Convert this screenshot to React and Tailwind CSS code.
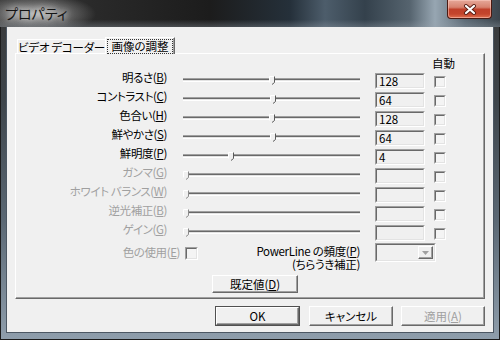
const FONT = "font-['Noto_Sans_CJK_JP','Noto_Sans',sans-serif] [font-feature-settings:'palt']";

function U({ children }) {
  return <span className="underline underline-offset-[1px]">{children}</span>;
}

function Sunken({ className = "", children, fill = "bg-[#f0f0f0]" }) {
  return (
    <div className={`border-t border-l border-r border-b border-t-[#a0a0a0] border-l-[#a0a0a0] border-r-white border-b-white ${className}`}>
      <div className={`h-full w-full border-t border-l border-r border-b border-t-[#696969] border-l-[#696969] border-r-[#e3e3e3] border-b-[#e3e3e3] ${fill}`}>
        {children}
      </div>
    </div>
  );
}

function Raised({ className = "", children }) {
  return (
    <div className={`border-t border-l border-r border-b border-t-white border-l-white border-r-[#696969] border-b-[#696969] shadow-[inset_-1px_-1px_0_#a0a0a0] bg-[#f0f0f0] ${className}`}>
      {children}
    </div>
  );
}

function Thumb({ left, disabled }) {
  return (
    <svg className="absolute top-[-2px]" style={{ left }} width="6" height="9" viewBox="0 0 6 9">
      <path d="M0.5 0.5 H5.5 V6.5 L3 8.5 L0.5 6.5 Z" fill="#f0f0f0" />
      <path d="M0.5 6.5 V0.5 H5" stroke="#ffffff" fill="none" />
      <path d="M5.5 0.5 V6.5 L3 8.5" stroke={disabled ? "#8a8a8a" : "#5a5a5a"} fill="none" />
    </svg>
  );
}

const rows = [
  { label: "明るさ", k: "B", val: "128", pos: 272, en: true },
  { label: "コントラスト", k: "C", val: "64", pos: 273, en: true },
  { label: "色合い", k: "H", val: "128", pos: 272, en: true },
  { label: "鮮やかさ", k: "S", val: "64", pos: 273, en: true },
  { label: "鮮明度", k: "P", val: "4", pos: 231, en: true },
  { label: "ガンマ", k: "G", val: "", pos: 186, en: false },
  { label: "ホワイト バランス", k: "W", val: "", pos: 186, en: false },
  { label: "逆光補正", k: "B", val: "", pos: 186, en: false },
  { label: "ゲイン", k: "G", val: "", pos: 186, en: false },
];

function Row({ r }) {
  return (
    <div className="h-[19px] flex items-start">
      <div className={`w-[151px] text-right mt-[-1px] h-[12px] leading-[12px] text-[11.5px] tracking-[-0.4px] whitespace-nowrap ${r.en ? "text-black" : "text-[#a0a0a0]"}`}>
        {r.label}(<U>{r.k}</U>)
      </div>
      <div className="ml-[16px] w-[177px] mt-[6px] h-[4px] relative">
        <div className="h-[4px] border-t border-b border-t-[#a0a0a0] border-b-white">
          <div className="h-[1px] bg-[#696969]" />
          <div className="h-[1px] bg-[#e3e3e3]" />
        </div>
        <Thumb left={r.pos - 183 - 3} disabled={!r.en} />
      </div>
      <Sunken className="ml-[15px] w-[50px] h-[16px] mt-[1px]">
        <div className="pl-[2px] text-[11.5px] leading-[13px] text-black">{r.val}</div>
      </Sunken>
      <Sunken className="ml-[9px] w-[12px] h-[12px] mt-[4px]" fill="bg-[#f4f4f4]" />
    </div>
  );
}

function TitleBar() {
  return (
    <div className="h-[27px] flex items-start relative [background:linear-gradient(180deg,rgba(0,0,0,0)_0%,rgba(0,0,0,0)_72%,rgba(150,160,170,0.35)_100%),radial-gradient(ellipse_60px_20px_at_36px_14px,rgba(200,200,200,0.85)_0%,rgba(160,160,160,0.5)_50%,rgba(60,60,60,0)_100%),linear-gradient(90deg,#3a3a3a_0%,#2a2a2a_18%,#1c1c1c_42%,#25303a_58%,#4d5d6b_65%,#34414c_73%,#56646f_82%,#97a6b2_87%,#5c6a75_93%,#3b444c_100%)]">
      <div className="h-[27px] flex items-center pl-[5px] text-[14px] text-[#141414] [text-shadow:0_0_6px_#e0e0e0,0_0_10px_#d0d0d0]">
        プロパティ
      </div>
      <div className="ml-auto mr-[8px] w-[45px] h-[19px] rounded-b-[4px] border-l border-r border-b border-l-[#4a1a12] border-r-[#4a1a12] border-b-[#4a1a12] flex items-center justify-center [background:linear-gradient(180deg,#e6a899_0%,#d7826f_40%,#c0402a_52%,#c4452c_78%,#e07050_100%)] shadow-[inset_0_0_0_1px_rgba(255,210,200,0.5)]">
        <svg width="14" height="11" viewBox="0 0 14 11">
          <path d="M3 2 L11 9 M11 2 L3 9" stroke="#5a1e14" strokeWidth="4" strokeLinecap="round" />
          <path d="M3 2 L11 9 M11 2 L3 9" stroke="#ffffff" strokeWidth="2.2" strokeLinecap="round" />
        </svg>
      </div>
    </div>
  );
}

function Client() {
  return (
    <div className="w-[486px] h-[305px] bg-[#f0f0f0] shadow-[0_0_0_1px_#4c5763] pt-[10px] px-[8px] flex flex-col text-black">
      <div className="flex items-end h-[16px]">
        <div className="ml-[2px] w-[88px] h-[14px] border-l border-t border-l-white border-t-white flex items-center justify-center text-[11.5px] tracking-[-0.3px] leading-[12px] whitespace-nowrap">
          ビデオ デコーダー
        </div>
        <div className="relative z-10 w-[70px] h-[17px] mb-[-1px] bg-[#f0f0f0] border-l border-t border-r border-l-white border-t-white border-r-[#696969] shadow-[inset_-1px_0_0_#a0a0a0] flex justify-center pt-[1px]">
          <div className="h-[15px] w-[66px] border border-dotted border-[#333] text-[11.5px] leading-[13px] text-center whitespace-nowrap">
            画像の調整
          </div>
        </div>
      </div>
      <div className="h-[246px] border-l border-t border-r border-b border-l-white border-t-white border-r-[#696969] border-b-[#696969] shadow-[inset_-1px_-1px_0_#a0a0a0] flex flex-col">
        <div className="h-[18px] pt-[3px] pl-[416px] text-[11.5px] leading-[12px]">自動</div>
        {rows.map((r, i) => (
          <Row key={i} r={r} />
        ))}
        <div className="flex items-start h-[27px]">
          <div className="w-[164px] text-right mt-[3px] leading-[12px] text-[11.5px] tracking-[-0.4px] text-[#a0a0a0] whitespace-nowrap">
            色の使用(<U>E</U>)
          </div>
          <Sunken className="ml-[5px] mt-[4px] w-[13px] h-[13px]" fill="bg-[#f4f4f4]" />
          <div className="w-[162px] text-right mt-[2px] leading-[13px] text-[11.5px] tracking-[-0.3px] whitespace-nowrap">
            <div>PowerLine の頻度(<U>P</U>)</div>
            <div>(ちらうき補正)</div>
          </div>
          <Sunken className="ml-[15px] w-[61px] h-[19px]">
            <div className="h-full flex justify-end items-stretch p-[1px]">
              <Raised className="w-[15px] flex items-center justify-center">
                <svg width="7" height="4" viewBox="0 0 7 4">
                  <path d="M0 0 H7 L3.5 4 Z" fill="#a0a0a0" />
                </svg>
              </Raised>
            </div>
          </Sunken>
        </div>
        <Raised className="mt-[5px] ml-[196px] w-[86px] h-[18px] flex items-center justify-center text-[11.5px] leading-[12px]">
          既定値(<U>D</U>)
        </Raised>
      </div>
      <div className="mt-[7px] flex justify-end">
        <div className="w-[85px] h-[20px] border border-[#505050]">
          <Raised className="h-full flex items-center justify-center text-[11.5px] leading-[12px]">OK</Raised>
        </div>
        <Raised className="ml-[9px] w-[84px] h-[20px] flex items-center justify-center text-[11.5px] leading-[12px]">
          キャンセル
        </Raised>
        <Raised className="ml-[8px] w-[84px] h-[20px] flex items-center justify-center text-[11.5px] leading-[12px] text-[#a0a0a0]">
          適用(<U>A</U>)
        </Raised>
      </div>
    </div>
  );
}

export default function App() {
  return (
    <div className={`w-[500px] h-[340px] flex flex-col overflow-hidden ${FONT} [background:linear-gradient(180deg,#383838_0%,#3e454b_30%,#5b6874_65%,#8f9eac_100%)] shadow-[inset_0_0_0_1px_#1c1c1c]`}>
      <TitleBar />
      <div className="flex">
        <div className="w-[7px] shrink-0" />
        <Client />
      </div>
    </div>
  );
}
